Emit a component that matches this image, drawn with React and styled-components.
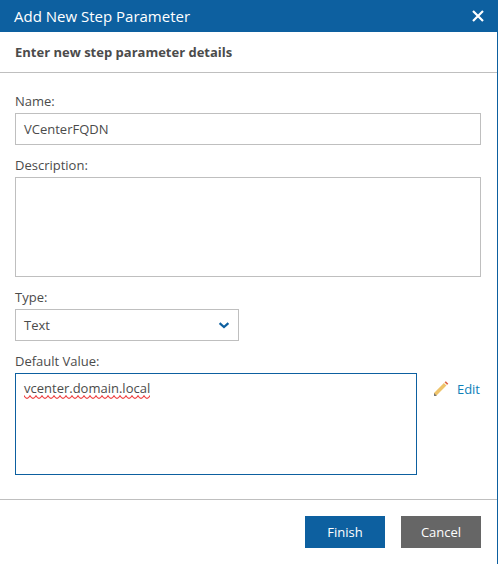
import React from "react";
import styled, { createGlobalStyle } from "styled-components";

const GlobalStyle = createGlobalStyle`
  * { box-sizing: border-box; }
  body { margin: 0; background: #fff; }
`;

const Dialog = styled.section`
  display: flex;
  flex-direction: column;
  width: 498px;
  height: 564px;
  border-right: 1px solid #0d60a0;
  background: #fff;
  color: #4b4b4b;
  font: 13px/16px "Open Sans", sans-serif;
`;

const TitleBar = styled.header`
  display: flex;
  align-items: center;
  justify-content: space-between;
  height: 32px;
  padding: 0 13px 0 14px;
  background: #0d60a0;
  color: #fff;
`;

const Title = styled.h1`
  margin: 0;
  font-size: 15px;
  font-weight: 400;
  line-height: 32px;
`;

const CloseButton = styled.button`
  display: flex;
  padding: 0;
  border: 0;
  background: none;
  color: inherit;
`;

const Subtitle = styled.h2`
  height: 41px;
  margin: 0;
  padding: 0 15px;
  border-bottom: 1px solid #bfbfbf;
  font-size: 13px;
  font-weight: 700;
  line-height: 40px;
`;

const Form = styled.div`
  display: flex;
  flex-direction: column;
  gap: 12px;
  flex: 1;
  padding: 20px 16px 0 15px;
`;

const Field = styled.div`
  display: flex;
  flex-direction: column;
`;

const Label = styled.label`
  height: 20px;
  line-height: 17px;
`;

const Control = styled.div`
  display: flex;
  align-items: ${(p) => (p.$multiline ? "flex-start" : "center")};
  justify-content: space-between;
  width: ${(p) => p.$width || "100%"};
  height: ${(p) => p.$height || "32px"};
  padding: ${(p) => (p.$multiline ? "6px 8px" : "0 8px")};
  border: 1px solid ${(p) => (p.$focused ? "#0d60a0" : "#bfbfbf")};
`;

const ValueRow = styled.div`
  display: flex;
  align-items: flex-start;
  justify-content: space-between;
`;

const Misspelled = styled.span`
  position: relative;
  line-height: 17px;
`;

const Squiggle = styled.svg`
  position: absolute;
  left: 0;
  top: 15px;
  width: 100%;
  height: 4px;
`;

const EditLink = styled.a`
  display: flex;
  align-items: center;
  gap: 8px;
  margin: 8px 1px 0 0;
  color: #0f80b8;
`;

const Footer = styled.footer`
  display: flex;
  justify-content: flex-end;
  gap: 16px;
  height: 65px;
  padding: 16px 16px 0;
  border-top: 1px solid #bfbfbf;
`;

const Button = styled.button`
  width: 80px;
  height: 32px;
  padding: 0;
  border: 0;
  background: ${(p) => (p.$primary ? "#0d60a0" : "#666")};
  color: #fff;
  font: inherit;
`;

const CloseIcon = () => (
  <svg width="12" height="12" viewBox="0 0 12 12">
    <path d="M1 1L11 11M11 1L1 11" stroke="currentColor" strokeWidth="2.2" />
  </svg>
);

const ChevronIcon = () => (
  <svg width="12" height="8" viewBox="0 0 12 8">
    <path d="M1.6 2.1L6 6L10.4 2.1" fill="none" stroke="#0d60a0" strokeWidth="2.2" />
  </svg>
);

const PencilIcon = () => (
  <svg width="16" height="16" viewBox="0 0 16 16">
    <path d="M1 12L10.9 2.1L13.4 4.6L3.5 14.5L1 15Z" fill="#eec36a" />
    <path d="M1 12.1L3.9 15H1Z" fill="#777" />
    <path d="M10.9 2.1L11.7 1.3L14.2 3.8L13.4 4.6Z" fill="#f4e9d2" />
    <path d="M11.7 1.3L12.8 0.3L15.3 2.8L14.2 3.8Z" fill="#de5b3d" />
  </svg>
);

export default function App() {
  return (
    <>
      <GlobalStyle />
      <Dialog>
        <TitleBar>
          <Title>Add New Step Parameter</Title>
          <CloseButton aria-label="Close"><CloseIcon /></CloseButton>
        </TitleBar>
        <Subtitle>Enter new step parameter details</Subtitle>
        <Form>
          <Field>
            <Label>Name:</Label>
            <Control>VCenterFQDN</Control>
          </Field>
          <Field>
            <Label>Description:</Label>
            <Control $multiline $height="100px" />
          </Field>
          <Field>
            <Label>Type:</Label>
            <Control $width="224px">
              Text
              <ChevronIcon />
            </Control>
          </Field>
          <Field>
            <Label>Default Value:</Label>
            <ValueRow>
              <Control $multiline $focused $width="402px" $height="102px">
                <Misspelled>
                  vcenter.domain.local
                  <Squiggle>
                    <defs>
                      <pattern id="wave" width="6" height="4" patternUnits="userSpaceOnUse">
                        <path d="M-1 -0.2L0 0.7Q3 6 6 0.7L7 -0.2" fill="none" stroke="#ee3b3b" strokeWidth="1.1" />
                      </pattern>
                    </defs>
                    <rect width="100%" height="4" fill="url(#wave)" />
                  </Squiggle>
                </Misspelled>
              </Control>
              <EditLink>
                <PencilIcon />
                Edit
              </EditLink>
            </ValueRow>
          </Field>
        </Form>
        <Footer>
          <Button $primary>Finish</Button>
          <Button>Cancel</Button>
        </Footer>
      </Dialog>
    </>
  );
}
